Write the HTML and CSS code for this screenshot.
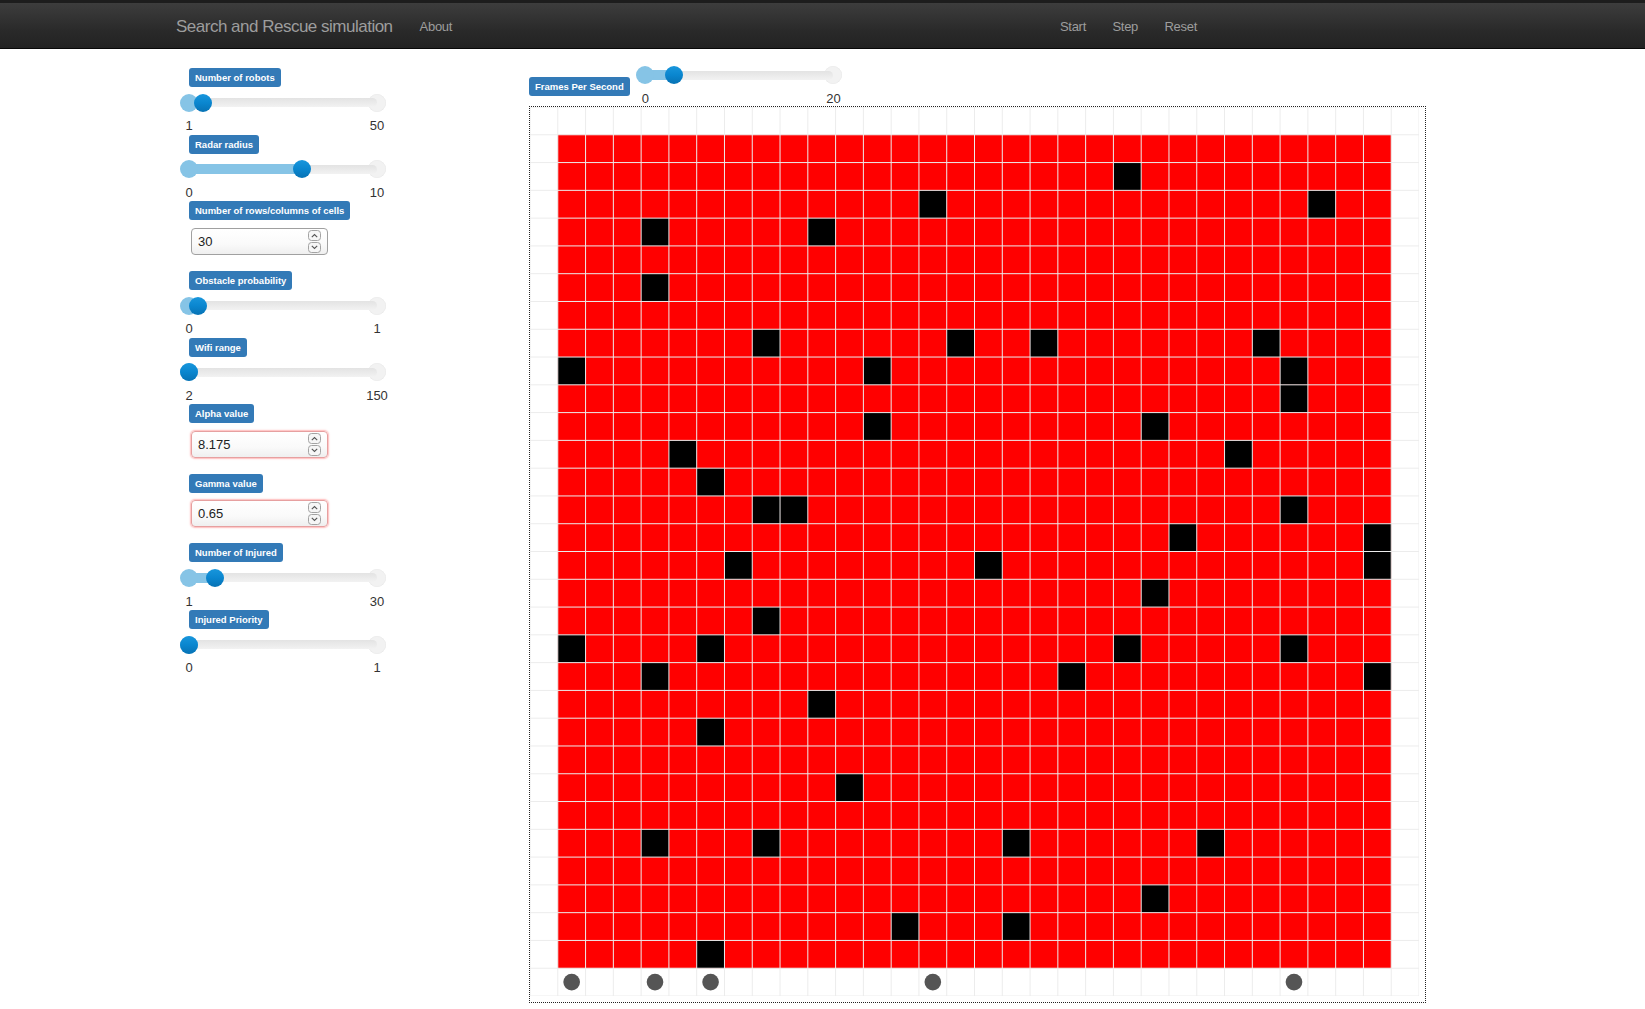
FILE: index.html
```html
<!DOCTYPE html>
<html>
<head>
<meta charset="utf-8">
<title>Search and Rescue simulation</title>
<link rel="stylesheet" href="styles.css">
</head>
<body>
<header class="navbar">
  <div class="nav-left">
    <span class="brand">Search and Rescue simulation</span>
    <span class="nav-link">About</span>
  </div>
  <div class="nav-right">
    <span class="nav-link">Start</span>
    <span class="nav-link">Step</span>
    <span class="nav-link">Reset</span>
  </div>
</header>

<div class="page">
  <aside class="sidebar">
    <div class="group slider-group">
      <span class="badge">Number of robots</span>
      <div class="slider">
        <span class="dot dot-max"></span>
        <div class="rail">
          <span class="track"></span>
          <span class="fill" style="width:7.6%"></span>
          <span class="dot dot-min"></span>
          <span class="handle" style="left:7.6%"></span>
        </div>
      </div>
      <div class="ticks"><span>1</span><span>50</span></div>
    </div>

    <div class="group slider-group">
      <span class="badge">Radar radius</span>
      <div class="slider">
        <span class="dot dot-max"></span>
        <div class="rail">
          <span class="track"></span>
          <span class="fill" style="width:60%"></span>
          <span class="dot dot-min"></span>
          <span class="handle" style="left:60%"></span>
        </div>
      </div>
      <div class="ticks"><span>0</span><span>10</span></div>
    </div>

    <div class="group input-group">
      <span class="badge">Number of rows/columns of cells</span>
      <div class="numbox">
        <span class="numval">30</span>
        <svg class="spin" width="13" height="23" viewBox="0 0 13 23"><rect x="0.5" y="0.5" width="12" height="10" rx="3" fill="#f6f6f6" stroke="#a3a3a3"/><path d="M3.8 7.2l2.7-2.7 2.7 2.7" fill="none" stroke="#555" stroke-width="1.1"/><rect x="0.5" y="12.5" width="12" height="10" rx="3" fill="#f6f6f6" stroke="#a3a3a3"/><path d="M3.8 15.8l2.7 2.7 2.7-2.7" fill="none" stroke="#555" stroke-width="1.1"/></svg>
      </div>
    </div>

    <div class="group slider-group">
      <span class="badge">Obstacle probability</span>
      <div class="slider">
        <span class="dot dot-max"></span>
        <div class="rail">
          <span class="track"></span>
          <span class="fill" style="width:5%"></span>
          <span class="dot dot-min"></span>
          <span class="handle" style="left:5%"></span>
        </div>
      </div>
      <div class="ticks"><span>0</span><span>1</span></div>
    </div>

    <div class="group slider-group">
      <span class="badge">Wifi range</span>
      <div class="slider">
        <span class="dot dot-max"></span>
        <div class="rail">
          <span class="track"></span>
          <span class="dot dot-min"></span>
          <span class="handle" style="left:0%"></span>
        </div>
      </div>
      <div class="ticks"><span>2</span><span>150</span></div>
    </div>

    <div class="group input-group">
      <span class="badge">Alpha value</span>
      <div class="numbox invalid">
        <span class="numval">8.175</span>
        <svg class="spin" width="13" height="23" viewBox="0 0 13 23"><rect x="0.5" y="0.5" width="12" height="10" rx="3" fill="#f6f6f6" stroke="#a3a3a3"/><path d="M3.8 7.2l2.7-2.7 2.7 2.7" fill="none" stroke="#555" stroke-width="1.1"/><rect x="0.5" y="12.5" width="12" height="10" rx="3" fill="#f6f6f6" stroke="#a3a3a3"/><path d="M3.8 15.8l2.7 2.7 2.7-2.7" fill="none" stroke="#555" stroke-width="1.1"/></svg>
      </div>
    </div>

    <div class="group input-group">
      <span class="badge">Gamma value</span>
      <div class="numbox invalid">
        <span class="numval">0.65</span>
        <svg class="spin" width="13" height="23" viewBox="0 0 13 23"><rect x="0.5" y="0.5" width="12" height="10" rx="3" fill="#f6f6f6" stroke="#a3a3a3"/><path d="M3.8 7.2l2.7-2.7 2.7 2.7" fill="none" stroke="#555" stroke-width="1.1"/><rect x="0.5" y="12.5" width="12" height="10" rx="3" fill="#f6f6f6" stroke="#a3a3a3"/><path d="M3.8 15.8l2.7 2.7 2.7-2.7" fill="none" stroke="#555" stroke-width="1.1"/></svg>
      </div>
    </div>

    <div class="group slider-group">
      <span class="badge">Number of Injured</span>
      <div class="slider">
        <span class="dot dot-max"></span>
        <div class="rail">
          <span class="track"></span>
          <span class="fill" style="width:13.8%"></span>
          <span class="dot dot-min"></span>
          <span class="handle" style="left:13.8%"></span>
        </div>
      </div>
      <div class="ticks"><span>1</span><span>30</span></div>
    </div>

    <div class="group slider-group">
      <span class="badge">Injured Priority</span>
      <div class="slider">
        <span class="dot dot-max"></span>
        <div class="rail">
          <span class="track"></span>
          <span class="dot dot-min"></span>
          <span class="handle" style="left:0%"></span>
        </div>
      </div>
      <div class="ticks"><span>0</span><span>1</span></div>
    </div>
  </aside>

  <main class="main">
    <div class="fps-row">
      <span class="badge fps-badge">Frames Per Second</span>
      <div class="fps-control">
        <div class="slider">
          <span class="dot dot-max"></span>
          <div class="rail">
            <span class="track"></span>
            <span class="fill" style="width:15%"></span>
            <span class="dot dot-min"></span>
            <span class="handle" style="left:15%"></span>
          </div>
        </div>
        <div class="ticks fps-ticks"><span>0</span><span>20</span></div>
      </div>
    </div>

    <div class="board">
      <svg class="grid" width="889" height="889" viewBox="0 0 32 32">
        <rect x="1" y="1" width="30" height="30" fill="#ff0000"/>
        <g fill="#000">
          <rect x="21" y="2" width="1" height="1"/>
          <rect x="14" y="3" width="1" height="1"/>
          <rect x="28" y="3" width="1" height="1"/>
          <rect x="4" y="4" width="1" height="1"/>
          <rect x="10" y="4" width="1" height="1"/>
          <rect x="4" y="6" width="1" height="1"/>
          <rect x="8" y="8" width="1" height="1"/>
          <rect x="15" y="8" width="1" height="1"/>
          <rect x="18" y="8" width="1" height="1"/>
          <rect x="26" y="8" width="1" height="1"/>
          <rect x="1" y="9" width="1" height="1"/>
          <rect x="12" y="9" width="1" height="1"/>
          <rect x="27" y="9" width="1" height="1"/>
          <rect x="27" y="10" width="1" height="1"/>
          <rect x="12" y="11" width="1" height="1"/>
          <rect x="22" y="11" width="1" height="1"/>
          <rect x="5" y="12" width="1" height="1"/>
          <rect x="25" y="12" width="1" height="1"/>
          <rect x="6" y="13" width="1" height="1"/>
          <rect x="8" y="14" width="1" height="1"/>
          <rect x="9" y="14" width="1" height="1"/>
          <rect x="27" y="14" width="1" height="1"/>
          <rect x="23" y="15" width="1" height="1"/>
          <rect x="30" y="15" width="1" height="1"/>
          <rect x="7" y="16" width="1" height="1"/>
          <rect x="16" y="16" width="1" height="1"/>
          <rect x="30" y="16" width="1" height="1"/>
          <rect x="22" y="17" width="1" height="1"/>
          <rect x="8" y="18" width="1" height="1"/>
          <rect x="1" y="19" width="1" height="1"/>
          <rect x="6" y="19" width="1" height="1"/>
          <rect x="21" y="19" width="1" height="1"/>
          <rect x="27" y="19" width="1" height="1"/>
          <rect x="4" y="20" width="1" height="1"/>
          <rect x="19" y="20" width="1" height="1"/>
          <rect x="30" y="20" width="1" height="1"/>
          <rect x="10" y="21" width="1" height="1"/>
          <rect x="6" y="22" width="1" height="1"/>
          <rect x="11" y="24" width="1" height="1"/>
          <rect x="4" y="26" width="1" height="1"/>
          <rect x="8" y="26" width="1" height="1"/>
          <rect x="17" y="26" width="1" height="1"/>
          <rect x="24" y="26" width="1" height="1"/>
          <rect x="22" y="28" width="1" height="1"/>
          <rect x="13" y="29" width="1" height="1"/>
          <rect x="17" y="29" width="1" height="1"/>
          <rect x="6" y="30" width="1" height="1"/>
        </g>
        <path fill="none" stroke="#ececec" stroke-width="1" vector-effect="non-scaling-stroke" d="M0 0v32M1 0v32M2 0v32M3 0v32M4 0v32M5 0v32M6 0v32M7 0v32M8 0v32M9 0v32M10 0v32M11 0v32M12 0v32M13 0v32M14 0v32M15 0v32M16 0v32M17 0v32M18 0v32M19 0v32M20 0v32M21 0v32M22 0v32M23 0v32M24 0v32M25 0v32M26 0v32M27 0v32M28 0v32M29 0v32M30 0v32M31 0v32M32 0v32M0 0h32M0 1h32M0 2h32M0 3h32M0 4h32M0 5h32M0 6h32M0 7h32M0 8h32M0 9h32M0 10h32M0 11h32M0 12h32M0 13h32M0 14h32M0 15h32M0 16h32M0 17h32M0 18h32M0 19h32M0 20h32M0 21h32M0 22h32M0 23h32M0 24h32M0 25h32M0 26h32M0 27h32M0 28h32M0 29h32M0 30h32M0 31h32M0 32h32"/>
        <g fill="#555">
          <circle cx="1.5" cy="31.5" r="0.3"/>
          <circle cx="4.5" cy="31.5" r="0.3"/>
          <circle cx="6.5" cy="31.5" r="0.3"/>
          <circle cx="14.5" cy="31.5" r="0.3"/>
          <circle cx="27.5" cy="31.5" r="0.3"/>
        </g>
      </svg>
    </div>
  </main>
</div>
</body>
</html>
```

FILE: styles.css
```css
* { box-sizing: border-box; }

html, body {
  margin: 0;
  padding: 0;
  background: #fff;
  font-family: "Liberation Sans", Arial, sans-serif;
  color: #333;
}

/* ---------- navbar ---------- */
.navbar {
  display: flex;
  align-items: center;
  height: 49px;
  padding-left: 176px;
  padding-top: 2px;
  border-top: 3px solid #1d1d1d;
  border-bottom: 1px solid #080808;
  background: linear-gradient(to bottom, #3d3d3d 0%, #2a2a2a 60%, #222 100%);
}

.nav-left {
  flex: 0 0 884px;
  display: flex;
  align-items: center;
}

.nav-right {
  display: flex;
  align-items: center;
}

.brand {
  font-size: 17px;
  letter-spacing: -0.5px;
  color: #9d9d9d;
  margin-right: 27px;
}

.nav-link {
  font-size: 13px;
  letter-spacing: -0.3px;
  color: #9d9d9d;
}

.nav-right .nav-link + .nav-link {
  margin-left: 26.5px;
}

/* ---------- layout ---------- */
.page {
  display: flex;
  align-items: flex-start;
}

.sidebar {
  flex: 0 0 529px;
  padding-left: 180px;
  padding-top: 19px;
}

.main {
  padding-top: 17px;
}

/* ---------- badges ---------- */
.badge {
  display: block;
  width: max-content;
  height: 19px;
  line-height: 19px;
  padding: 0 6px;
  background: #337ab7;
  color: #fff;
  font-size: 9.5px;
  font-weight: bold;
  border-radius: 3px;
  white-space: nowrap;
}

.sidebar .badge {
  margin-left: 9px;
}

/* ---------- groups ---------- */
.slider-group {
  margin-bottom: 1.2px;
}

.input-group {
  margin-bottom: 16px;
}

.slider-group .slider {
  margin-top: 6.7px;
}

/* ---------- slider ---------- */
.slider {
  position: relative;
  width: 206px;
  height: 18px;
}

.rail {
  position: absolute;
  left: 9px;
  right: 9px;
  top: 0;
  bottom: 0;
}

.track {
  position: absolute;
  left: 0;
  right: 0;
  top: 4.5px;
  height: 9px;
  border-radius: 4.5px;
  background: linear-gradient(to bottom, #e3e3e3, #f2f2f2);
}

.fill {
  position: absolute;
  left: 0;
  top: 4px;
  height: 10px;
  background: #86c4e6;
}

.dot {
  position: absolute;
  top: 0;
  width: 18px;
  height: 18px;
  border-radius: 50%;
}

.dot-min {
  left: -9px;
  background: #86c4e6;
}

.dot-max {
  right: 0;
  background: #f2f2f2;
  box-shadow: inset 0 0 1px rgba(0, 0, 0, 0.12);
}

.handle {
  position: absolute;
  top: 0;
  width: 18px;
  height: 18px;
  margin-left: -9px;
  border-radius: 50%;
  background: linear-gradient(to bottom, #1896dc 0%, #0a86cf 50%, #0772b4 100%);
}

.ticks {
  display: flex;
  justify-content: space-between;
  width: 206px;
  margin-top: 6.8px;
  font-size: 13px;
  line-height: 15px;
  color: #333;
}

.ticks span {
  display: flex;
  justify-content: center;
  width: 18px;
  white-space: nowrap;
}

/* ---------- number inputs ---------- */
.numbox {
  display: flex;
  align-items: center;
  justify-content: space-between;
  width: 137px;
  height: 27px;
  margin-top: 7.5px;
  margin-left: 11px;
  padding: 0 6px 0 6px;
  border: 1px solid #a0a0a0;
  border-radius: 4px;
  background: linear-gradient(to bottom, #ffffff 0%, #fafafa 60%, #efefef 100%);
  font-size: 13px;
  color: #222;
}

.numbox.invalid {
  border-color: #e6a0a0;
  box-shadow: 0 0 1.5px 1px rgba(255, 60, 60, 0.35);
}

.spin {
  display: block;
}

/* ---------- main area ---------- */
.fps-row {
  display: flex;
  align-items: flex-start;
  height: 40px;
}

.fps-badge {
  margin-top: 11.3px;
}

.fps-control {
  margin-left: 6.7px;
}

.fps-ticks {
  margin-top: 8px;
  line-height: 14px;
}

.board {
  width: 897px;
  height: 897px;
  border: 1px dotted #222;
}

.grid {
  display: block;
}
```
